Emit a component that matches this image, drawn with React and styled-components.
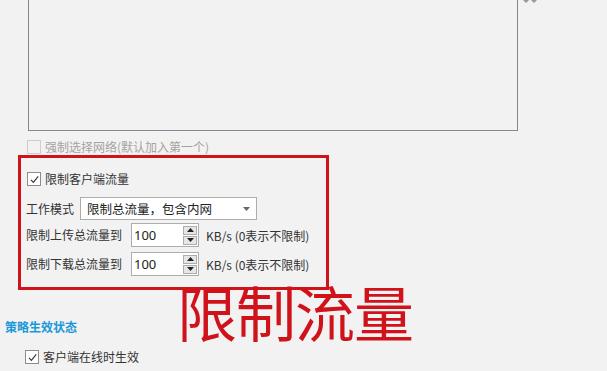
import React from 'react';
import styled, { createGlobalStyle } from 'styled-components';

const GlobalStyle = createGlobalStyle`
  html, body {
    margin: 0;
    padding: 0;
    background: #f2f2f2;
  }
  body {
    font-family: "Noto Sans CJK SC", "Noto Sans", sans-serif;
    font-size: 12px;
    color: #333;
  }
`;

function CheckMark() {
  return (
    <svg width="11" height="11" viewBox="0 0 11 11">
      <path d="M2 5.8 L4.4 8.3 L9.2 2.4" fill="none" stroke="#333" strokeWidth="1.1" />
    </svg>
  );
}

function Check({ checked, disabled, label }) {
  return (
    <CheckRow $disabled={disabled}>
      <Box $disabled={disabled}>{checked && <CheckMark />}</Box>
      <span>{label}</span>
    </CheckRow>
  );
}

function Spinner({ value }) {
  return (
    <SpinBox>
      <SpinValue>{value}</SpinValue>
      <SpinButtons>
        <SpinBtn>
          <svg width="7" height="4" viewBox="0 0 7 4"><path d="M0 4 L3.5 0 L7 4 Z" fill="#222" /></svg>
        </SpinBtn>
        <SpinBtn>
          <svg width="7" height="4" viewBox="0 0 7 4"><path d="M0 0 L3.5 4 L7 0 Z" fill="#222" /></svg>
        </SpinBtn>
      </SpinButtons>
    </SpinBox>
  );
}

export default function App() {
  return (
    <Page>
      <GlobalStyle />
      <TopRow>
        <ListBox />
        <Marks>
          <svg width="14" height="3" viewBox="0 0 14 3">
            <path d="M0 0 L3 3 L6 0 Z M8 0 L11 3 L14 0 Z" fill="#9a9a9a" />
          </svg>
        </Marks>
      </TopRow>

      <Indent>
        <Check disabled label="强制选择网络(默认加入第一个)" />
      </Indent>

      <RedFrame>
        <Check checked label="限制客户端流量" />
        <FieldRow $top={11}>
          <Label $w={54}>工作模式</Label>
          <Select>
            <span>限制总流量，包含内网</span>
            <svg width="7" height="4" viewBox="0 0 7 4"><path d="M0 0 L3.5 4 L7 0 Z" fill="#666" /></svg>
          </Select>
        </FieldRow>
        <FieldRow $top={3}>
          <Label $w={105}>限制上传总流量到</Label>
          <Spinner value="100" />
          <Unit>KB/s (0表示不限制)</Unit>
        </FieldRow>
        <FieldRow $top={5}>
          <Label $w={105}>限制下载总流量到</Label>
          <Spinner value="100" />
          <Unit>KB/s (0表示不限制)</Unit>
        </FieldRow>
      </RedFrame>

      <SectionTitle>策略生效状态</SectionTitle>
      <SectionBody>
        <Check checked label="客户端在线时生效" />
      </SectionBody>

      <Annotation>限制流量</Annotation>
    </Page>
  );
}

const Page = styled.div`
  position: relative;
  width: 607px;
  height: 371px;
  overflow: hidden;
  background: #f2f2f2;
`;

const TopRow = styled.div`
  display: flex;
  align-items: flex-start;
  margin-top: -12px;
  padding-left: 28px;
`;

const ListBox = styled.div`
  width: 488px;
  height: 141px;
  border: 1px solid #82868e;
  background: #f2f2f2;
`;

const Marks = styled.div`
  display: flex;
  padding: 12px 0 0 5px;
  line-height: 0;
`;

const Indent = styled.div`
  padding: 9px 0 0 27px;
  height: 14px;
`;

const CheckRow = styled.label`
  display: flex;
  align-items: center;
  gap: 4px;
  height: 14px;
  color: ${p => (p.$disabled ? '#a3a3a3' : '#333')};
  line-height: 14px;
  white-space: nowrap;
`;

const Box = styled.span`
  width: 12px;
  height: 12px;
  border: 1px solid ${p => (p.$disabled ? '#cdcdcd' : '#8c8c8c')};
  background: ${p => (p.$disabled ? '#f2f2f2' : '#fff')};
  display: flex;
  align-items: center;
  justify-content: center;
  flex: none;
`;

const RedFrame = styled.div`
  margin: 1px 0 0 18px;
  width: 299px;
  height: 115px;
  border: 3px solid #d0121b;
  padding: 14px 0 0 6px;
`;

const FieldRow = styled.div`
  display: flex;
  align-items: center;
  margin-top: ${p => p.$top}px;
  margin-left: -1px;
`;

const Label = styled.span`
  width: ${p => p.$w}px;
  flex: none;
  white-space: nowrap;
  line-height: 16px;
`;

const Select = styled.div`
  flex: none;
  width: 177px;
  height: 23px;
  border: 1px solid #adadad;
  background: #fff;
  display: flex;
  align-items: center;
  justify-content: space-between;
  padding: 0 6px;
  box-sizing: border-box;
  color: #222;
  font-size: 12.5px;
`;

const SpinBox = styled.div`
  flex: none;
  width: 68px;
  height: 24px;
  box-sizing: border-box;
  border: 1px solid #adadad;
  background: #fff;
  display: flex;
  align-items: center;
  justify-content: space-between;
  padding: 0 1px 0 2px;
`;

const SpinValue = styled.span`
  font-family: "Noto Sans", "Liberation Sans", sans-serif;
  font-size: 13px;
  color: #222;
`;

const SpinButtons = styled.div`
  display: flex;
  flex-direction: column;
  gap: 1px;
`;

const SpinBtn = styled.div`
  width: 14px;
  height: 9px;
  box-sizing: border-box;
  border: 1px solid #adadad;
  background: #e6e6e6;
  display: flex;
  align-items: center;
  justify-content: center;
`;

const Unit = styled.span`
  margin-left: 7px;
  white-space: nowrap;
  color: #333;
`;

const SectionTitle = styled.div`
  margin: 30px 0 0 5px;
  font-weight: bold;
  color: #1c98d8;
  line-height: 14px;
`;

const SectionBody = styled.div`
  padding: 16px 0 0 25px;
`;

const Annotation = styled.div`
  position: absolute;
  left: 177px;
  top: 281px;
  font-size: 60px;
  line-height: 60px;
  color: #d0121b;
  font-family: "Noto Sans CJK SC", sans-serif;
  letter-spacing: -1px;
`;
